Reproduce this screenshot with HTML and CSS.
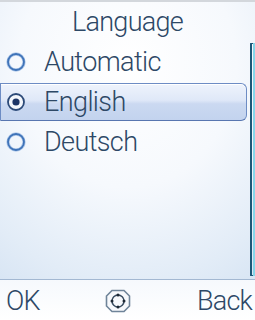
FILE: index.html
```html
<!DOCTYPE html>
<html lang="en">
<head>
    <meta charset="UTF-8">
    <meta name="viewport" content="width=device-width, initial-scale=1.0">
    <title>Language</title>
    <link rel="stylesheet" href="styles.css">
</head>
<body>
    <div class="screen">
        <div class="title">Language</div>

        <div class="content">
            <ul class="list">
                <li class="item">
                    <svg class="radio" width="20" height="20" viewBox="0 0 20 20">
                        <circle cx="10" cy="10" r="8" fill="none" stroke="#b5cdec" stroke-width="3.4"/>
                        <circle cx="10" cy="10" r="8" fill="none" stroke="#3f73b8" stroke-width="1.8"/>
                    </svg>
                    <span>Automatic</span>
                </li>
                <li class="item selected">
                    <div class="highlight">
                        <svg class="radio" width="20" height="20" viewBox="0 0 20 20">
                            <circle cx="10" cy="10" r="8" fill="#f4f7fc" stroke="#2c4a78" stroke-width="1.8"/>
                            <circle cx="10" cy="10" r="3.6" fill="#1d3566"/>
                        </svg>
                        <span>English</span>
                    </div>
                </li>
                <li class="item">
                    <svg class="radio" width="20" height="20" viewBox="0 0 20 20">
                        <circle cx="10" cy="10" r="8" fill="none" stroke="#b5cdec" stroke-width="3.4"/>
                        <circle cx="10" cy="10" r="8" fill="none" stroke="#3f73b8" stroke-width="1.8"/>
                    </svg>
                    <span>Deutsch</span>
                </li>
            </ul>
            <div class="scroll">
                <div class="scroll-bar"></div>
            </div>
        </div>

        <div class="softkeys">
            <span class="key">OK</span>
            <svg class="nav-icon" width="26" height="24" viewBox="0 0 26 24">
                <path d="M7 1.5 H19 L24.5 7 V17 L19 22.5 H7 L1.5 17 V7 Z" fill="#f7f9fc" stroke="#6f8499" stroke-width="1.6"/>
                <circle cx="13" cy="12" r="6" fill="none" stroke="#3c4f63" stroke-width="1.5"/>
                <circle cx="13" cy="6" r="1.5" fill="#1c2834"/>
                <circle cx="13" cy="18" r="1.5" fill="#1c2834"/>
                <circle cx="7" cy="12" r="1.5" fill="#1c2834"/>
                <circle cx="19" cy="12" r="1.5" fill="#1c2834"/>
            </svg>
            <span class="key">Back</span>
        </div>
    </div>
</body>
</html>
```

FILE: styles.css
```css
* {
    margin: 0;
    padding: 0;
    box-sizing: border-box;
}

body {
    width: 255px;
    height: 320px;
    overflow: hidden;
    font-family: Roboto, 'Liberation Sans', Arial, sans-serif;
    font-weight: 300;
    color: #2d4866;
    background: #ffffff;
}

.screen {
    width: 255px;
    height: 320px;
    display: flex;
    flex-direction: column;
    border-top: 2px solid #d3d7dc;
    background:
        radial-gradient(ellipse 95% 85% at 50% 20%, #ffffff 0%, #f6f9fd 45%, #e2ecf7 80%, #d5e3f3 100%);
}

.title {
    height: 39px;
    line-height: 40px;
    text-align: center;
    font-size: 27px;
    letter-spacing: -0.7px;
    padding-left: 0;
}

.content {
    height: 240px;
    display: flex;
}

.list {
    list-style: none;
    width: 247px;
    padding-top: 1px;
}

.item {
    height: 40px;
    display: flex;
    align-items: center;
    padding-left: 6px;
    font-size: 27px;
    letter-spacing: -0.6px;
}

.radio {
    flex-shrink: 0;
}

.item span {
    margin-left: 18px;
    line-height: 40px;
}

.item.selected {
    padding: 1px 0 1px 0;
}

.highlight {
    width: 100%;
    height: 38px;
    display: flex;
    align-items: center;
    padding-left: 5px;
    border: 1.5px solid #6d8cc4;
    border-bottom-color: #5876b0;
    border-radius: 0 6px 6px 0;
    background: linear-gradient(180deg, #eef3fc 0%, #dfe8f8 45%, #cbd9f1 55%, #c3d3ee 100%);
    box-shadow: inset 0 1px 0 #ffffff;
}

.scroll {
    width: 8px;
    padding: 2px 0 3px 3px;
}

.scroll-bar {
    height: 100%;
    width: 3px;
    border: 2px solid #1d5878;
    border-top-width: 1px;
    border-bottom-width: 1px;
    border-right: none;
    border-radius: 1px 0 0 1px;
    box-shadow: 2px 0 0 #86d6ea;
}

.softkeys {
    flex: 1;
    display: flex;
    align-items: center;
    justify-content: space-between;
    padding: 0 3px 0 6px;
    border-top: 1.5px solid #a3b8d2;
    background: linear-gradient(180deg, #f6f9fd 0%, #ffffff 100%);
}

.key {
    font-size: 27px;
    letter-spacing: -0.8px;
    line-height: 38px;
    padding-top: 2px;
}

.nav-icon {
    flex-shrink: 0;
    margin-top: 2px;
}
```
